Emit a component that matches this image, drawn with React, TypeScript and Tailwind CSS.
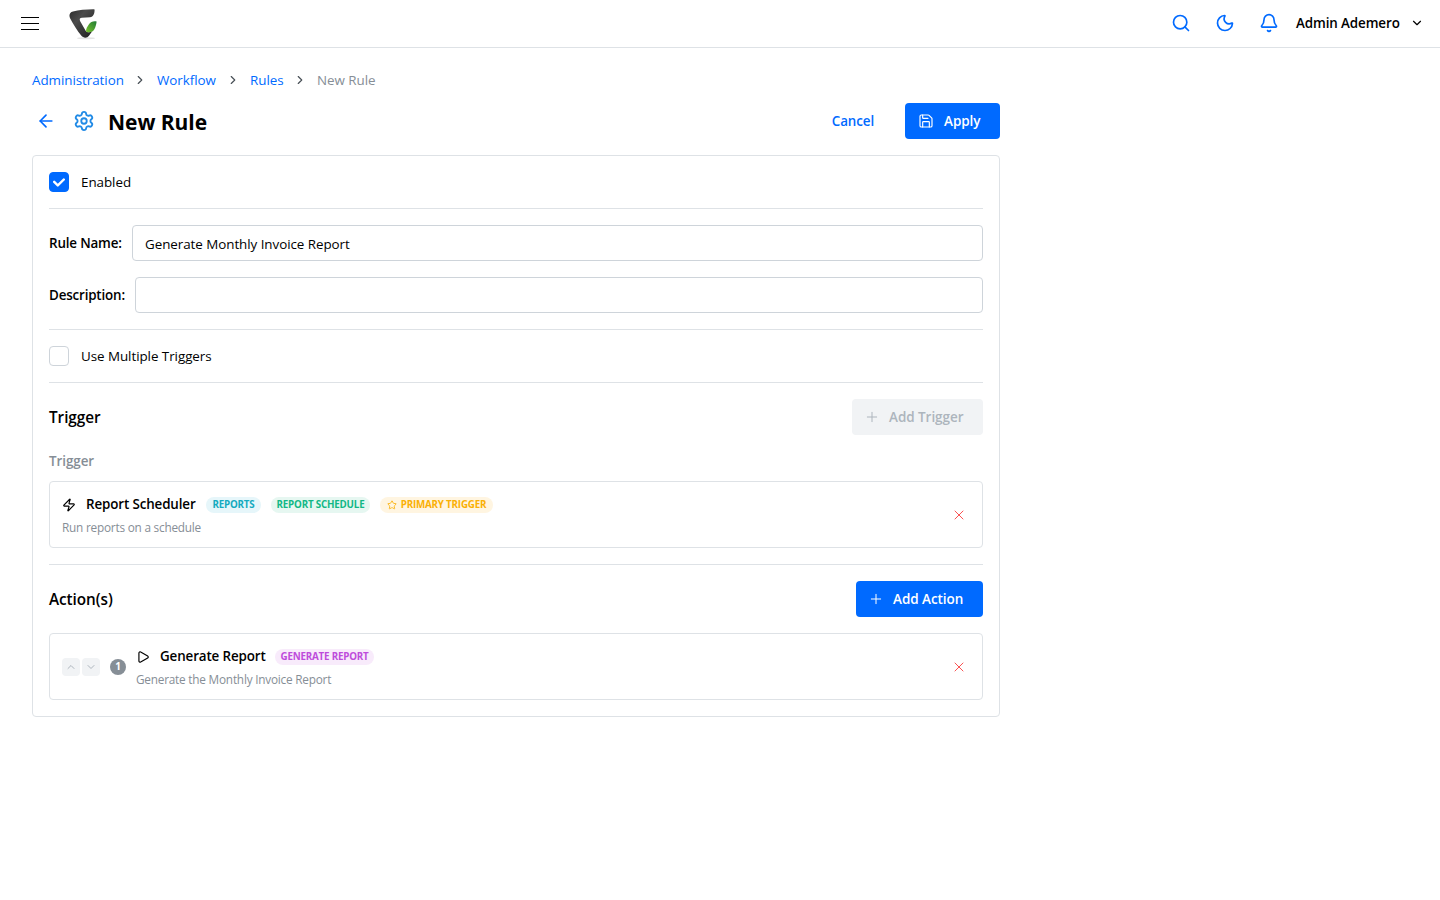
import type { ReactNode } from 'react';
import {
  ArrowLeft,
  Bell,
  ChevronDown,
  ChevronRight,
  ChevronUp,
  Moon,
  Play,
  Plus,
  Save,
  Search,
  Settings,
  Star,
  X,
  Zap,
} from 'lucide-react';

const crumbs = [
  { title: 'Administration', width: 'w-[91px]' },
  { title: 'Workflow', width: 'w-[59px]' },
  { title: 'Rules', width: 'w-[33px]' },
];

const Logo = () => (
  <svg width="30" height="32" viewBox="0 0 30 32">
    <defs>
      <linearGradient id="dark" x1="0" y1="0" x2="1" y2="1">
        <stop offset="0" stopColor="#2b2b2b" />
        <stop offset="0.35" stopColor="#4c4c4c" />
        <stop offset="1" stopColor="#1c1c1c" />
      </linearGradient>
      <linearGradient id="leaf" x1="1" y1="0" x2="0" y2="1">
        <stop offset="0" stopColor="#1f7a35" />
        <stop offset="1" stopColor="#7ac52c" />
      </linearGradient>
    </defs>
    <ellipse cx="17" cy="30.2" rx="9" ry="1" fill="#e4e4e4" />
    <path
      d="M25.6 1.4 C19 1.2 10 2.2 4 3.4 C0.6 4.2 -0.4 7.4 1.2 10.4 C4 16 8.4 22.6 12.2 27.6 C14.4 30.2 18 30.4 20 27.8 L23.4 23 C20.6 24.6 18.4 24.8 16.8 23 L11.2 13.2 C10.2 11.2 10.8 10 12.8 9.8 L21 9.2 C24.4 8.8 25.6 5.6 25.6 1.4 Z"
      fill="url(#dark)"
    />
    <path
      d="M27.6 13.4 C24.6 12.6 21.6 13.8 19.8 16.4 C18.2 18.8 17 20.6 17 23.4 C19.8 25.2 23.6 24.4 25.2 21.6 C26.6 19 27.4 16 27.6 13.4 Z"
      fill="url(#leaf)"
    />
  </svg>
);

const Header = () => (
  <header className="flex h-12 items-center justify-between border-b border-[#dee2e6] pr-4 pl-[21px]">
    <div className="flex items-center">
      <div className="flex w-[18px] flex-col gap-[5px]">
        <div className="h-px bg-black" />
        <div className="h-px bg-black" />
        <div className="h-px bg-black" />
      </div>
      <div className="ml-[30px]">
        <Logo />
      </div>
    </div>
    <div className="flex items-center">
      <div className="flex gap-6 text-[#006aff]">
        <Search size={20} strokeWidth={2} />
        <Moon size={20} strokeWidth={2} />
        <Bell size={20} strokeWidth={2} />
      </div>
      <span className="ml-[17px] w-[105px] font-semibold tracking-[-0.1px] whitespace-nowrap">Admin Ademero</span>
      <ChevronDown className="ml-[9px]" size={14} />
    </div>
  </header>
);

const Divider = () => <div className="h-px bg-[#dee2e6]" />;

const Checkbox = ({ label, checked }: { label: string; checked?: boolean }) => (
  <div className="flex h-5 items-center gap-3">
    <div
      className={`flex size-5 items-center justify-center rounded border ${
        checked ? 'border-[#006aff] bg-[#006aff]' : 'border-[#ced4da] bg-white'
      }`}
    >
      {checked && (
        <svg width="12" height="9" viewBox="0 0 10 7" fill="none">
          <path
            d="M4 4.586L1.707 2.293A1 1 0 1 0 .293 3.707l3 3a.997.997 0 0 0 1.414 0l5-5A1 1 0 1 0 8.293.293L4 4.586z"
            fill="white"
          />
        </svg>
      )}
    </div>
    <span>{label}</span>
  </div>
);

const Field = ({ label, value, labelWidth }: { label: string; value: string; labelWidth: string }) => (
  <div className="flex items-center gap-2.5">
    <span className={`font-semibold tracking-[-0.17px] whitespace-nowrap ${labelWidth}`}>{label}</span>
    <div className="flex h-9 flex-1 items-center rounded border border-[#ced4da] px-3 pt-0.5">{value}</div>
  </div>
);

const Badge = ({ className, children }: { className: string; children: ReactNode }) => (
  <span
    className={`mt-px flex h-4 items-center justify-center gap-1 rounded-full text-[9.8px] font-bold tracking-[-0.2px] whitespace-nowrap ${className}`}
  >
    {children}
  </span>
);

const RemoveIcon = () => <X className="mr-[3px] text-[#fa5252]" size={16} strokeWidth={1.5} />;

export default function App() {
  return (
    <div className="min-h-[900px] bg-white font-['Open_Sans','Noto_Sans',sans-serif] text-[13.4px] tracking-[-0.05px] text-black">
      <Header />
      <main className="w-[1000px] pt-[21px] pl-8">
        <nav className="flex h-[22px] items-center">
          {crumbs.map((crumb) => (
            <div key={crumb.title} className="flex items-center">
              <span className={`whitespace-nowrap text-[#006aff] ${crumb.width}`}>{crumb.title}</span>
              <ChevronRight className="mx-2.5 text-[#495057]" size={14} />
            </div>
          ))}
          <span className="text-[#868e96]">New Rule</span>
        </nav>

        <div className="mt-3 flex h-9 items-center">
          <ArrowLeft className="ml-1 text-[#006aff]" size={20} />
          <Settings className="ml-[17px] text-[#228be6]" size={22} />
          <h1 className="ml-[13px] pt-[3px] text-[21px] font-bold">New Rule</h1>
          <span className="mr-[31px] ml-auto font-semibold tracking-[-0.12px] text-[#006aff]">Cancel</span>
          <button className="flex h-9 w-[95px] items-center rounded bg-[#006aff] pl-[13px] font-semibold text-white">
            <Save size={16} strokeWidth={1.75} />
            <span className="ml-2.5 text-[13.5px]">Apply</span>
          </button>
        </div>

        <section className="mt-4 flex flex-col gap-4 rounded border border-[#dee2e6] p-4">
          <Checkbox label="Enabled" checked />
          <Divider />
          <Field label="Rule Name:" labelWidth="w-[73px]" value="Generate Monthly Invoice Report" />
          <Field label="Description:" labelWidth="w-[76px]" value="" />
          <Divider />
          <Checkbox label="Use Multiple Triggers" />
          <Divider />

          <div className="flex h-9 items-center justify-between">
            <h2 className="pt-px text-[15.3px] font-semibold">Trigger</h2>
            <button className="flex h-9 w-[131px] items-center rounded bg-[#f1f3f5] pl-3 font-semibold text-[#adb5bd]">
              <Plus size={16} strokeWidth={1.5} />
              <span className="ml-[9px] text-[13.5px]">Add Trigger</span>
            </button>
          </div>
          <div>
            <div className="h-[22px] font-semibold text-[#868e96]">Trigger</div>
            <div className="mt-2 flex h-[67px] items-center justify-between rounded border border-[#dee2e6] px-3">
              <div className="pt-px">
                <div className="flex h-[22px] items-center">
                  <Zap size={14} />
                  <span className="ml-2.5 w-[110px] font-semibold tracking-[-0.13px] whitespace-nowrap">
                    Report Scheduler
                  </span>
                  <Badge className="ml-2.5 w-[55px] bg-[#e6f6fa] text-[#15aabf]">REPORTS</Badge>
                  <Badge className="ml-2.5 w-[99px] bg-[#e6f7f1] text-[#12b886]">REPORT SCHEDULE</Badge>
                  <Badge className="ml-2.5 w-[113px] bg-[#fff5e1] text-[#fab005]">
                    <Star size={10} />
                    PRIMARY TRIGGER
                  </Badge>
                </div>
                <div className="mt-0.5 text-[11.8px] leading-[19px] tracking-[-0.22px] text-[#868e96]">
                  Run reports on a schedule
                </div>
              </div>
              <RemoveIcon />
            </div>
          </div>
          <Divider />

          <div className="flex h-9 items-center justify-between">
            <h2 className="pt-px text-[15.3px] font-semibold">Action(s)</h2>
            <button className="flex h-9 w-[127px] items-center rounded bg-[#006aff] pl-3 font-semibold text-white">
              <Plus size={16} strokeWidth={1.5} />
              <span className="ml-[9px] text-[13.5px]">Add Action</span>
            </button>
          </div>
          <div className="flex h-[67px] items-center rounded border border-[#dee2e6] px-3">
            <div className="flex gap-0.5 text-[#adb5bd]">
              <div className="flex size-[18px] items-center justify-center rounded bg-[#f1f3f5]">
                <ChevronUp size={12} />
              </div>
              <div className="flex size-[18px] items-center justify-center rounded bg-[#f1f3f5]">
                <ChevronDown size={12} />
              </div>
            </div>
            <div className="ml-2.5 flex size-4 items-center justify-center rounded-full bg-[#868e96] text-[10px] font-bold text-white">
              1
            </div>
            <div className="ml-2.5 pt-px">
              <div className="flex h-[22px] items-center">
                <Play size={14} />
                <span className="ml-2.5 w-[105px] font-semibold tracking-[-0.13px] whitespace-nowrap">
                  Generate Report
                </span>
                <Badge className="ml-2.5 w-[99px] bg-[#f8ebfb] text-[#be4bdb]">GENERATE REPORT</Badge>
              </div>
              <div className="mt-0.5 text-[11.8px] leading-[19px] tracking-[-0.22px] text-[#868e96]">
                Generate the Monthly Invoice Report
              </div>
            </div>
            <div className="ml-auto">
              <RemoveIcon />
            </div>
          </div>
        </section>
      </main>
    </div>
  );
}
